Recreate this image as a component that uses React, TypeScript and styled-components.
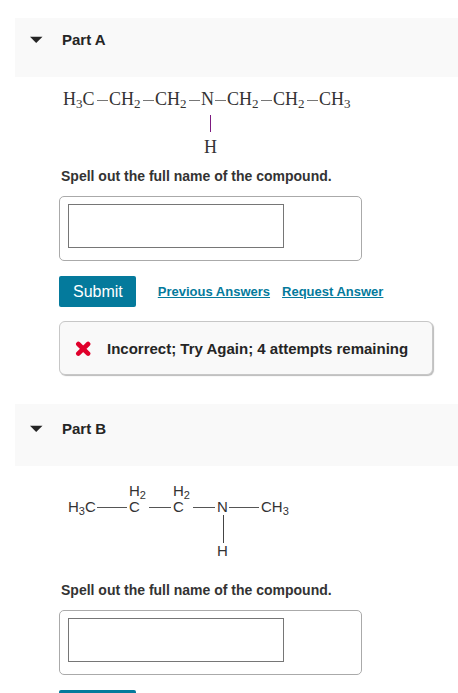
import React, { useId, useState } from "react";
import styled, { createGlobalStyle } from "styled-components";

const GlobalStyle = createGlobalStyle`
  *, *::before, *::after { box-sizing: border-box; }
  body {
    margin: 0;
    background: #fff;
    color: #252525;
    font-family: "Liberation Sans", Arial, sans-serif;
  }
`;

const Page = styled.main`
  height: 100vh;
  overflow-y: auto;
  scrollbar-width: none;
  padding: 18px 0 0 15px;
`;

const Part = styled.section<{ $gap?: number }>`
  margin-bottom: ${({ $gap = 0 }) => $gap}px;
`;

const PartHeader = styled.h2<{ $roomy?: boolean }>`
  margin: 0;
  padding: ${({ $roomy }) => ($roomy ? "15px 15px 27px" : "12px 15px 27px")};
  background: #f9f9f9;
  font-size: 15px;
  line-height: 20px;
`;

const Toggle = styled.button`
  display: flex;
  align-items: center;
  gap: 18px;
  padding: 0;
  border: 0;
  background: none;
  color: inherit;
  font: inherit;
  cursor: pointer;
`;

const Arrow = styled.svg<{ $open: boolean }>`
  width: 14px;
  height: 8px;
  transform: ${({ $open }) => ($open ? "none" : "rotate(-90deg)")};
`;

const PartBody = styled.div`
  padding: 0 24px 0 44px;
`;

const Structure = styled.svg<{ $top: number }>`
  display: block;
  max-width: 100%;
  margin-top: ${({ $top }) => $top}px;
`;

const Prompt = styled.label`
  display: block;
  padding: 8px 0 10px 2px;
  color: #333;
  font-size: 14px;
  font-weight: 700;
  line-height: 20px;
`;

const AnswerBox = styled.div`
  width: 303px;
  max-width: 100%;
  padding: 7px 8px 12px;
  border: 1px solid #aaa;
  border-radius: 5px;
`;

const AnswerInput = styled.input`
  display: block;
  width: 216px;
  max-width: 100%;
  height: 44px;
  padding: 4px 8px;
  border: 1px solid #767676;
  border-radius: 0;
  background: #fff;
  font: inherit;
`;

const Actions = styled.div`
  display: flex;
  align-items: center;
  margin-top: 15px;
`;

const SubmitButton = styled.button`
  height: 31px;
  margin-right: 22px;
  padding: 0 13px 0 14px;
  border: 0;
  border-radius: 2px;
  background: #047a9c;
  color: #fff;
  font-family: inherit;
  font-size: 16px;
  cursor: pointer;
`;

const ActionLink = styled.a`
  margin-right: 12px;
  color: #047a9c;
  font-size: 13px;
  font-weight: 700;
  line-height: 18px;
  text-underline-offset: 1px;
`;

const Feedback = styled.div`
  display: flex;
  align-items: center;
  gap: 16px;
  width: fit-content;
  max-width: 100%;
  margin-top: 14px;
  padding: 17px 24px 15px 15px;
  border: 1px solid #c7c7c7;
  border-radius: 6px;
  background: #f9f9f9;
  box-shadow: 1px 1px 1px #bbb;
  font-size: 15px;
  font-weight: 700;
  line-height: 20px;
  white-space: nowrap;
`;

const SerifText = styled.text`
  fill: #333;
  font-family: "Liberation Serif", "Times New Roman", serif;
  font-size: 18px;
`;

const SansText = styled.text`
  fill: #333;
  font-family: "Liberation Sans", Arial, sans-serif;
  font-size: 15px;
`;

const Sub = styled.tspan<{ $size: number }>`
  font-size: ${({ $size }) => $size}px;
`;

function Dipropylamine() {
  const groups = [
    { x: 50, sub: "2" },
    { x: 96, sub: "2" },
    { x: 168, sub: "2" },
    { x: 214, sub: "2" },
    { x: 260, sub: "3" },
  ];
  const bonds = [38, 84, 130, 156, 202, 248];
  return (
    <Structure $top={12} width="300" height="69" viewBox="0 0 300 69" role="img" aria-label="Compound structure">
      <SerifText x="4" y="16">H<Sub $size={13} dy="3">3</Sub><tspan dy="-3">C</tspan></SerifText>
      {groups.map((g) => (
        <SerifText key={g.x} x={g.x} y="16">CH<Sub $size={13} dy="3">{g.sub}</Sub></SerifText>
      ))}
      <SerifText x="142" y="16">N</SerifText>
      <SerifText x="145" y="64">H</SerifText>
      {bonds.map((x) => (
        <path key={x} d={`M${x} 11.5h11`} stroke="#777" />
      ))}
      <path d="M151.5 26v17" stroke="#7d1a80" />
    </Structure>
  );
}

function Propylmethylamine() {
  return (
    <Structure $top={16} width="240" height="90" viewBox="0 0 240 90" role="img" aria-label="Compound structure">
      <SansText x="9" y="30">H<Sub $size={11} dy="3">3</Sub><tspan dy="-3">C</tspan></SansText>
      {[70, 114].map((x) => (
        <React.Fragment key={x}>
          <SansText x={x} y="14">H<Sub $size={11} dy="3">2</Sub></SansText>
          <SansText x={x} y="30">C</SansText>
        </React.Fragment>
      ))}
      <SansText x="158" y="30">N</SansText>
      <SansText x="202" y="30">CH<Sub $size={11} dy="3">3</Sub></SansText>
      <SansText x="158" y="74">H</SansText>
      <path d="M38 25.5h30M90 25.5h22M134 25.5h22M170 25.5h30" stroke="#555" />
      <path d="M164.5 33v28" stroke="#444" />
    </Structure>
  );
}

function Answer() {
  const id = useId();
  return (
    <>
      <Prompt htmlFor={id}>Spell out the full name of the compound.</Prompt>
      <AnswerBox>
        <AnswerInput id={id} type="text" />
      </AnswerBox>
    </>
  );
}

function Heading(props: { title: string; roomy?: boolean; open: boolean; onToggle: () => void }) {
  return (
    <PartHeader $roomy={props.roomy}>
      <Toggle type="button" aria-expanded={props.open} onClick={props.onToggle}>
        <Arrow $open={props.open} viewBox="0 0 14 8" aria-hidden="true">
          <path d="M0 .8h12.5L6.2 7z" fill="#252525" />
        </Arrow>
        {props.title}
      </Toggle>
    </PartHeader>
  );
}

export default function App() {
  const [openA, setOpenA] = useState(true);
  const [openB, setOpenB] = useState(true);
  return (
    <>
      <GlobalStyle />
      <Page>
        <Part $gap={29}>
          <Heading title="Part A" open={openA} onToggle={() => setOpenA(!openA)} />
          {openA && (
            <PartBody>
              <Dipropylamine />
              <Answer />
              <Actions>
                <SubmitButton type="button">Submit</SubmitButton>
                <ActionLink href="#previous">Previous Answers</ActionLink>
                <ActionLink href="#request">Request Answer</ActionLink>
              </Actions>
              <Feedback role="status">
                <svg width="16" height="16" viewBox="0 0 16 16" aria-hidden="true">
                  <path
                    d="M3.3 3l9.8 9.6M13.1 3L3.3 12.6"
                    stroke="#e0002b"
                    strokeWidth="4.6"
                    strokeLinecap="round"
                  />
                </svg>
                <span>Incorrect; Try Again; 4 attempts remaining</span>
              </Feedback>
            </PartBody>
          )}
        </Part>
        <Part>
          <Heading title="Part B" roomy open={openB} onToggle={() => setOpenB(!openB)} />
          {openB && (
            <PartBody>
              <Propylmethylamine />
              <Answer />
              <Actions>
                <SubmitButton type="button">Submit</SubmitButton>
              </Actions>
            </PartBody>
          )}
        </Part>
      </Page>
    </>
  );
}
